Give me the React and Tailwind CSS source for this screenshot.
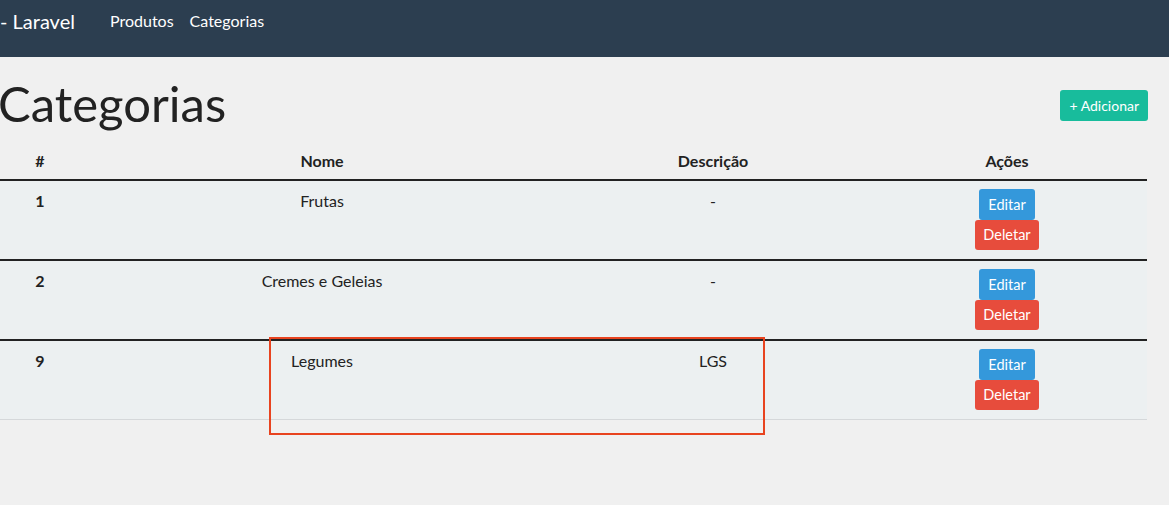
import React from 'react'

const rows = [
  { id: 1, nome: 'Frutas', desc: '-' },
  { id: 2, nome: 'Cremes e Geleias', desc: '-' },
  { id: 9, nome: 'Legumes', desc: 'LGS' },
]

export default function App() {
  return (
    <div className="relative min-h-[505px] bg-[#f0f0f0] text-[#222] font-['Lato','Liberation_Sans',sans-serif] text-[16px]">
      {/* Navbar */}
      <div className="h-[57px] bg-[#2c3e50] flex items-start text-white">
        <span className="pt-[9px] text-[20px] leading-[24px] w-[110px]">- Laravel</span>
        <a className="pt-[10px] leading-[21px] text-[16px] mr-[16px]">Produtos</a>
        <a className="pt-[10px] leading-[21px] text-[16px]">Categorias</a>
      </div>

      {/* Content */}
      <div className="w-[1148px]">
        <div className="flex items-start justify-between pt-[15px]">
          <h1 className="text-[49px] leading-[62px] -ml-[2px]">Categorias</h1>
          <button className="mt-[18px] h-[31px] px-[9px] rounded-[3px] bg-[#18bc9c] text-white text-[14px]">
            + Adicionar
          </button>
        </div>

        <table className="w-[1147px] mt-[8px] border-collapse table-fixed">
          <colgroup>
            <col className="w-[80px]" />
            <col className="w-[484px]" />
            <col className="w-[298px]" />
            <col className="w-[285px]" />
          </colgroup>
          <thead>
            <tr className="border-b-2 border-[#222]">
              <th className="py-[8px] leading-[21px] font-bold">#</th>
              <th className="py-[8px] leading-[21px] font-bold">Nome</th>
              <th className="py-[8px] leading-[21px] font-bold">Descrição</th>
              <th className="py-[8px] pl-[5px] leading-[21px] font-bold">Ações</th>
            </tr>
          </thead>
          <tbody>
            {rows.map((r, i) => (
              <tr
                key={r.id}
                className={`bg-[#ecf0f1] align-top ${i < rows.length - 1 ? 'border-b-2 border-[#222]' : 'border-b border-[#d5d8da]'}`}
              >
                <td className="pt-[9px] leading-[21px] text-center font-bold">{r.id}</td>
                <td className="pt-[9px] leading-[21px] text-center">{r.nome}</td>
                <td className="pt-[9px] leading-[21px] text-center">{r.desc}</td>
                <td className="pt-[8px] pb-[9px] pl-[5px] text-center">
                  <div className="flex flex-col items-center">
                    <button className="h-[31px] px-[9px] rounded-[3px] bg-[#3498db] text-white text-[14.5px]">Editar</button>
                    <button className="h-[30px] px-[8.5px] rounded-[3px] bg-[#e74c3c] text-white text-[14.5px]">Deletar</button>
                  </div>
                </td>
              </tr>
            ))}
          </tbody>
        </table>
      </div>

      {/* annotation */}
      <div className="absolute left-[269px] top-[337px] w-[496px] h-[98px] border-2 border-[#e8431f]" />
    </div>
  )
}
